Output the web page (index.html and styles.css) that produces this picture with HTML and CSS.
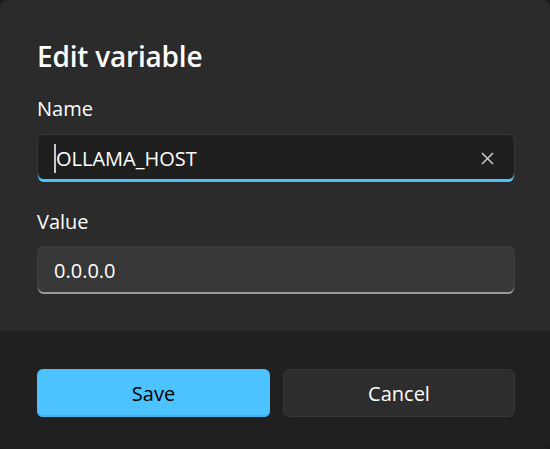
FILE: index.html
```html
<!DOCTYPE html>
<html lang="en">
<head>
<meta charset="utf-8">
<title>Edit variable</title>
<link rel="stylesheet" href="styles.css">
</head>
<body>
<div class="dialog">
  <div class="content">
    <h1 class="title">Edit variable</h1>
    <div class="label">Name</div>
    <div class="field field-focused">
      <span class="caret"></span>
      <span class="field-text">OLLAMA_HOST</span>
      <span class="clear">
        <svg width="13" height="13" viewBox="0 0 13 13" aria-hidden="true">
          <path d="M1 1 L12 12 M12 1 L1 12" stroke="#c9c9c9" stroke-width="1.5" fill="none"/>
        </svg>
      </span>
    </div>
    <div class="label label-value">Value</div>
    <div class="field field-rest">
      <span class="field-text">0.0.0.0</span>
    </div>
  </div>
  <div class="footer">
    <button class="btn btn-primary">Save</button>
    <button class="btn btn-secondary">Cancel</button>
  </div>
</div>
</body>
</html>
```

FILE: styles.css
```css
html, body {
  margin: 0;
  padding: 0;
  background: #1c1c1c;
}

body {
  width: 550px;
  height: 449px;
  font-family: "Open Sans", "Noto Sans", sans-serif;
  color: #ffffff;
}

.dialog {
  width: 550px;
  height: 449px;
  box-sizing: border-box;
  border-radius: 8px;
  overflow: hidden;
  background: #2b2b2b;
  display: flex;
  flex-direction: column;
}

.content {
  padding: 36px 35px 0 37px;
  height: 331px;
  box-sizing: border-box;
}

.title {
  margin: 0;
  font-size: 28px;
  line-height: 40px;
  font-weight: 600;
  letter-spacing: -0.2px;
}

.label {
  margin-top: 18.5px;
  font-size: 20px;
  line-height: 28px;
}

.label-value {
  margin-top: 25.5px;
}

.field {
  margin-top: 11.5px;
  height: 48px;
  box-sizing: border-box;
  border-radius: 6px;
  display: flex;
  align-items: center;
  padding: 0 20px 0 16px;
  font-size: 20px;
}

.label-value + .field {
  margin-top: 10.5px;
}

.field-focused {
  background: #1f1f1f;
  border: 1px solid #363636;
  border-bottom: none;
  box-shadow: inset 0 -3px 0 #4cc2ff;
}

.field-rest {
  background: #373737;
  border: 1px solid #3c3c3c;
  border-bottom: none;
  box-shadow: inset 0 -2px 0 #9a9a9a;
}

.caret {
  width: 2px;
  height: 29px;
  background: #c8c8c8;
  margin-right: 0;
  flex: none;
}

.field-text {
  flex: 1;
  white-space: nowrap;
}

.clear {
  display: flex;
  align-items: center;
  justify-content: center;
  width: 13px;
  height: 13px;
}

.footer {
  flex: 1;
  background: #202020;
  padding: 38px 35px 0 37px;
  display: grid;
  grid-template-columns: 233px 232px;
  column-gap: 13px;
  align-content: start;
}

.btn {
  height: 48px;
  border-radius: 6px;
  font-family: "Open Sans", "Noto Sans", sans-serif;
  font-size: 20px;
  padding: 0;
  margin: 0;
  cursor: default;
}

.btn-primary {
  background: #4cc2ff;
  color: #000000;
  border: none;
  box-shadow: inset 0 -2px 0 #45b1e8;
}

.btn-secondary {
  background: #2d2d2d;
  color: #ffffff;
  border: 1px solid #353535;
}
```
